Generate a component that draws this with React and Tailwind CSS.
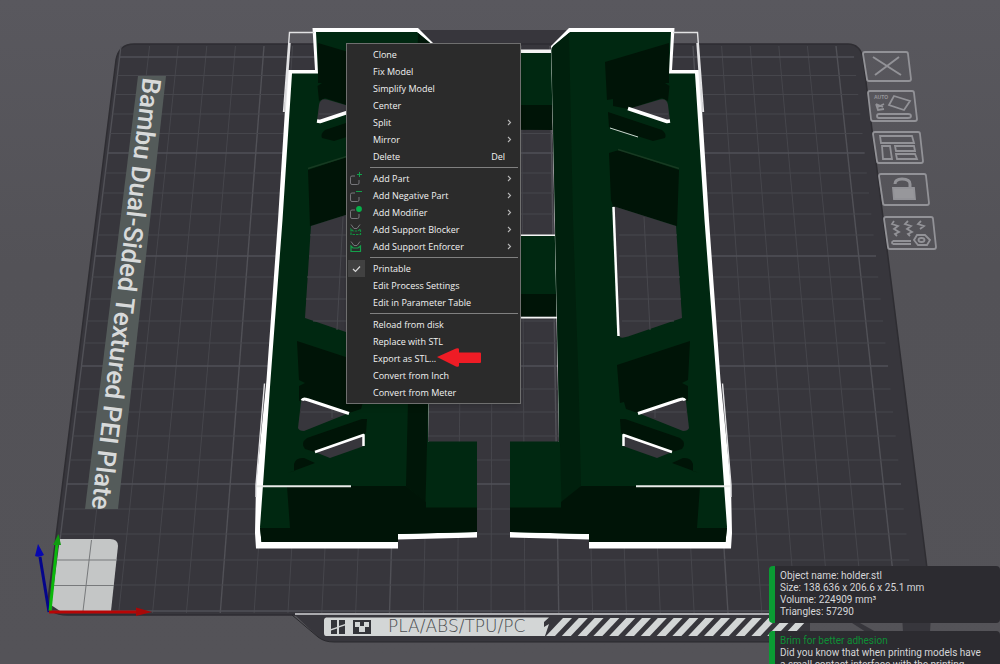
import React from "react";

const ROWS = [57, 75.5, 94.5, 114, 133.5, 153, 173, 193, 214, 235, 256, 277, 299, 321, 343, 366, 389, 412, 436, 460, 484, 509, 534, 560, 585, 611];
const COLS = Array.from({ length: 26 }, (_, i) => i);
const STRIPES = Array.from({ length: 16 }, (_, i) => 546 + i * 15.8);

const MAIN = "#002811";
const DARK = "#001407";
const FLOOR = "#37363c";

function Grid() {
  return (
    <g fill="none">
      {COLS.map((i) => (
        <path key={i} d={`M${121 + 28.6 * i} 46L${51 + 33.85 * i} 613`} stroke={i % 5 === 0 ? "#515157" : "#46464c"} strokeWidth={i % 5 === 0 ? 1.4 : 1} />
      ))}
      {ROWS.map((y, k) => {
        const t = (611 - y) / 564;
        return <path key={y} d={`M${51 + 70 * t} ${y}H${915 - 62 * t}`} stroke={k % 5 === 0 ? "#515157" : "#46464c"} strokeWidth={k % 5 === 0 ? 1.4 : 1} />;
      })}
    </g>
  );
}

function Plate() {
  return (
    <g>
      <path d="M412 46L420 30H566L574 46Z" fill={FLOOR} />
      <path d="M134 44H848Q860 44 863 58L931 600Q932 615 918 615H70Q47 616 48 600L116 60Q119 44 134 44Z" fill={FLOOR} stroke="#2e2d32" strokeWidth="1.5" />
      <path d="M288 615L296 616L318 637Q324 642 334 642H810V615Z" fill={FLOOR} />
      <path d="M292 615L318 637Q324 642 334 642H810" fill="none" stroke="#29292d" strokeWidth="1" />
      <path d="M852 623H860L876 632H866ZM902 615H931L930 632H903Z" fill={FLOOR} />
      <Grid />
    </g>
  );
}

function Holes() {
  return (
    <g fill={FLOOR}>
      <path d="M628 109L660 99.500Q667 98 668 105L670 121L664 122Z" />
      <path d="M613 206L676 226L682 318L628 336.500Q620 339 619 336Z" />
      <path d="M638 413L680 399Q685 398 686 402L689 428Q688 431 683 431Z" />
      <path d="M623 434L672 452L657 458L623 446Z" />
      <g stroke="#48484e" strokeWidth="1">
        <path d="M644 217L650 330M619 235H677M619 256H678M619 277H680M619 299H681M622 321H674M640 114H668M640 412H686M655 408V418" />
      </g>
    </g>
  );
}

function Rail({ side }) {
  return (
    <g>
      <path d="M551 46L569 28H674.500L672 70H699.500L709 220L720.500 380L731 485L732 533L731 548.500H589V539.500L510 537.500V532L559 441Z" fill="#fff" />
      <path d="M551.500 50L553 46L570 32H671L669 73.500H695L704.500 220L716.500 380L727 527L725.500 542H589V534L510 532V441.500H559L558 366L555 220Z" fill={MAIN} />
      <path d="M551.500 48L569 33L573 220L578.500 380L581 486L561.500 502L558 366L555 220Z" fill={side} />
      <path d="M581 486H700L697 528H727L725.500 542H589V534L510 532V507.500H561V502Z" fill={DARK} />
      <g fill={DARK}>
        <path d="M669 43L605 62L607 100L613 99V106L628 109L662 98L668 101L669.500 86L665 83H669Z" />
        <path d="M608 112L662 130Q667 134 665 138L653 141L609 127Z" />
        <path d="M609 153L619 150L679 170L677 226L613 206L611 200Z" />
        <path d="M617 365L690 341L688 380L682 383L688 386V401L680 399L638 413L626 409L624 402L620 403Z" />
        <path d="M620 419L625 419L680 438Q687 443 682 449L672 452L621 433Z" />
        <path d="M672 463L683 458Q691 457 693 464V471L699 473Z" />
      </g>
      <path d="M618 149.500L679 168.500" stroke="#173a22" strokeWidth="1.500" />
      <Holes />
      <g fill="none" stroke="#fff" strokeWidth="3" strokeLinejoin="round">
        <path d="M628 108.500L667 121.500L670 121" strokeWidth="3.500" />
        <path d="M613.500 207L618.500 336" strokeWidth="2.500" />
        <path d="M638 413.500L680 399.500Q684 398 685 400.500" />
        <path d="M623.500 446V435L672 452" strokeWidth="2.500" />
      </g>
      <path d="M610 128L638 137" stroke="#cdd5cf" strokeWidth="1" />
      <path d="M636 486.300H731" stroke="#e8eae8" strokeWidth="2" />
      <g fill="none" stroke="#e2e2e4" strokeWidth="1.400">
        <path d="M673 32.500H697.500L703.500 112M697 43L702 112" />
        <path d="M722.500 383.500L731 485V497" />
      </g>
    </g>
  );
}

function Model() {
  return (
    <g>
      <path d="M420 49.500H556V53H420ZM420 234.500H556V236H420ZM420 316.500H557V318.500H420Z" fill="#f4f4f4" />
      <path d="M420 53H556V105H420ZM420 236H557V294H420Z" fill={MAIN} />
      <path d="M420 105H556V130L420 129ZM420 294H558V316.500H420Z" fill={DARK} />
      <Rail side="#00200d" />
      <g transform="translate(987 0) scale(-1 1)">
        <Rail side="#001608" />
      </g>
    </g>
  );
}

function Corner() {
  return (
    <g>
      <path d="M60 539H110Q118 539 118 546L111 611H60L51 605Z" fill="#c4c6c6" />
      <path d="M56 560H116M53 585.500H114M91.500 540L83 611" stroke="#77797b" strokeWidth="1" fill="none" />
      <path d="M49 612L40 557" stroke="#05058a" strokeWidth="3" />
      <path d="M38 544L35 556Q39 558 44 555Z" fill="#0808b0" />
      <path d="M50 611L57 544" stroke="#0bb80b" strokeWidth="3" />
      <path d="M58.500 534L53 545H61Z" fill="#109a10" />
      <path d="M49 612H138" stroke="#b80505" strokeWidth="3" />
      <path d="M136 607.500L152 612L136 616Z" fill="#a80808" />
    </g>
  );
}

function PlateLabels() {
  return (
    <g>
      <path d="M138 76H166L118 509H85Z" fill="#545b5a" />
      <text transform="translate(143 77) rotate(96.8)" fontFamily="Roboto, sans-serif" fontWeight="500" fontSize="26" fill="#d8dada">
        Bambu Dual-Sided Textured PEI Plate
      </text>
      <path d="M295 614H770" stroke="#aaaaae" strokeWidth="2" />
      <path d="M326 617.500H549L544 622V627L549 624L545 636H326Q324 636 324 633V620Q324 618 326 617.500Z" fill="#d3d6d6" />
      <g fill="#d3d6d6">
        {STRIPES.map((x) => (
          <path key={x} d={`M${x} 636L${x + 17} 618H${x + 26}L${x + 9} 636Z`} />
        ))}
      </g>
      <g fill="#34353a">
        <path d="M331 620H337V627L331 629ZM331 630.500L337 628.500V634H331ZM339 620H345V624L339 626ZM339 627.500L345 625.500V634H339Z" />
        <path d="M353 620H371V634H353Z" />
      </g>
      <path d="M355 622H360V626H364V622H369V627H365V632H359V627H355Z" fill="#d3d6d6" />
      <text x="388" y="632" fontFamily="DejaVu Sans, sans-serif" fontWeight="200" fontSize="17" fill="#4a4d50">
        PLA/ABS/TPU/PC
      </text>
    </g>
  );
}

function Scene() {
  return (
    <svg className="absolute inset-0 h-full w-full" viewBox="0 0 1000 664" preserveAspectRatio="xMinYMin slice" aria-hidden="true">
      <defs>
        <linearGradient id="bg" x1="0" y1="0" x2="0" y2="1">
          <stop offset="0" stopColor="#59585e" />
          <stop offset="0.4" stopColor="#535257" />
          <stop offset="1" stopColor="#545358" />
        </linearGradient>
      </defs>
      <rect width="1000" height="664" fill="url(#bg)" />
      <Plate />
      <PlateLabels />
      <Corner />
      <Model />
    </svg>
  );
}

const TOOLS = [
  {
    label: "Remove plate",
    place: "absolute left-[862px] top-[51px]",
    art: (
      <>
        <path d="M3 1H44Q46 1 46 3L49 28Q49 30 47 30H7Q5 30 5 28L1 3Q1 1 3 1Z" />
        <path d="M11 6L39 24M37 6L13 24" strokeWidth="2" />
      </>
    ),
  },
  {
    label: "Auto orient",
    place: "absolute left-[867px] top-[90px]",
    art: (
      <>
        <path d="M3 1H45Q47 1 47 3L50 29Q50 31 48 31H6Q4 31 4 29L1 3Q1 1 3 1Z" />
        <path d="M27 6L43 11L37 20L22 15ZM12 24H41Q44 24 44 26T41 28H12Q10 28 10 26T12 24ZM17 14L11 17M9 14L11 20L17 19M9 14L16 17" />
        <text x="7" y="9" fontFamily="Liberation Sans, sans-serif" fontSize="5" fontWeight="700" fill="#97979b" stroke="none">AUTO</text>
      </>
    ),
  },
  {
    label: "Arrange objects",
    place: "absolute left-[872px] top-[131px]",
    art: <path d="M3 1H46Q48 1 48 3L51 30Q51 32 49 32H7Q5 32 5 30L1 3Q1 1 3 1ZM8 5H40L42 12H9ZM10 15H18L20 28H11ZM23 15H42L43 20H24ZM24 23H43L45 28H25Z" />,
  },
  {
    label: "Lock plate",
    place: "absolute left-[877px] top-[172px]",
    art: (
      <>
        <path d="M4 2H47Q49 2 49 4L52 31Q52 33 50 33H8Q6 33 6 31L2 4Q2 2 4 2Z" />
        <path d="M18 12Q18 7 25 7Q33 7 33 12V17" strokeWidth="3" />
        <path d="M16 16H37L38 27H17Z" fill="#97979b" />
      </>
    ),
  },
  {
    label: "Plate settings",
    place: "absolute left-[883px] top-[215px]",
    art: (
      <>
        <path d="M3 2H48Q50 2 50 4L53 32Q53 34 51 34H7Q5 34 5 32L1 4Q1 2 3 2Z" />
        <path d="M11 6L9 9L15 11L11 14L16 17L12 19L14 21M25 6L22 9L28 11L24 14L29 17L25 19L27 21M38 6L35 9L41 11L37 14M10 26H28M10 29H28M10 26Q8 28 10 29M34 20H42L47 25L44 30H35L31 25Z" />
        <ellipse cx="38.500" cy="25" rx="3" ry="2" />
      </>
    ),
  },
];

function PlateTools() {
  return TOOLS.map((t) => (
    <button key={t.label} type="button" aria-label={t.label} className={t.place}>
      <svg width="55" height="36" viewBox="0 0 55 36" fill="none" stroke="#929297" strokeWidth="1.800">
        {t.art}
      </svg>
    </button>
  ));
}

const boxPath = "M6 4H3Q1.500 4 1.500 5.500V11Q1.500 12.500 3 12.500H8.500Q10 12.500 10 11V8";
const ICONS = {
  part: (
    <>
      <path d={boxPath} stroke="#76767a" />
      <path d="M10.500 0V5M8 2.500H13" stroke="#11a04a" />
    </>
  ),
  negative: (
    <>
      <path d={boxPath} stroke="#76767a" />
      <path d="M7 2.500H13" stroke="#11a04a" />
    </>
  ),
  modifier: (
    <>
      <path d={boxPath} stroke="#76767a" />
      <circle cx="10" cy="3" r="2.900" fill="#06b14a" />
    </>
  ),
  blocker: (
    <>
      <path d="M2 1.500L5 5.500H8L11 1.500" stroke="#76767a" />
      <path d="M2 6V11.500H11.500V6L9 8H4Z" stroke="#11903f" strokeWidth="1.200" strokeDasharray="2.500 1" />
    </>
  ),
  enforcer: (
    <>
      <path d="M2 1.500L5 5.500H8L11 1.500" stroke="#76767a" />
      <path d="M2 6V11.500H11.500V6L9 8H4Z" stroke="#14a04a" strokeWidth="1.200" />
    </>
  ),
};

const MENU = [
  [{ text: "Clone" }, { text: "Fix Model" }, { text: "Simplify Model" }, { text: "Center" }, { text: "Split", sub: true }, { text: "Mirror", sub: true }, { text: "Delete", hint: "Del" }],
  [
    { text: "Add Part", sub: true, icon: "part" },
    { text: "Add Negative Part", sub: true, icon: "negative" },
    { text: "Add Modifier", sub: true, icon: "modifier" },
    { text: "Add Support Blocker", sub: true, icon: "blocker" },
    { text: "Add Support Enforcer", sub: true, icon: "enforcer" },
  ],
  [{ text: "Printable", checked: true }, { text: "Edit Process Settings" }, { text: "Edit in Parameter Table" }],
  [{ text: "Reload from disk" }, { text: "Replace with STL" }, { text: "Export as STL...", arrow: true }, { text: "Convert from Inch" }, { text: "Convert from Meter" }],
];

function MenuItem({ item }) {
  return (
    <button
      type="button"
      role={item.checked ? "menuitemcheckbox" : "menuitem"}
      aria-checked={item.checked}
      aria-haspopup={item.sub ? "menu" : undefined}
      className="relative flex h-[17px] w-full items-center pr-2 text-left hover:bg-[#414141]"
    >
      <span className={item.checked ? "ml-px mr-2 flex h-[17px] w-[17px] items-center justify-center bg-[#414141]" : "ml-0.5 mr-[7px] flex w-[17px]"}>
        {item.icon && (
          <svg width="14" height="14" viewBox="0 0 14 14" fill="none">{ICONS[item.icon]}</svg>
        )}
        {item.checked && (
          <svg width="9" height="8" viewBox="0 0 9 8" fill="none" stroke="#d8d8d8" strokeWidth="1.200"><path d="M1 4L3.500 6.500L8 1.500" /></svg>
        )}
      </span>
      <span className="flex-1">{item.text}</span>
      {item.hint && <span className="mr-[7px]">{item.hint}</span>}
      {item.sub && (
        <svg width="5" height="7" viewBox="0 0 5 7" fill="none" stroke="#b9b9b9" strokeWidth="1.100"><path d="M1 1L3.500 3.500L1 6" /></svg>
      )}
      {item.arrow && (
        <svg className="absolute left-[89px] top-[-2px]" width="46" height="20" viewBox="0 0 46 20" aria-hidden="true">
          <path d="M1 9L20 0.500Q23 -0.500 23 1.500V4.500H44Q45 4.500 45 5.500V14Q45 15 44 15H23V17.500Q23 19.500 20 18.500Z" fill="#ee1c25" />
        </svg>
      )}
    </button>
  );
}

function ContextMenu() {
  return (
    <div role="menu" aria-label="Object" className="absolute left-[346px] top-[43px] w-[175px] border border-[#6f6f6f] bg-[#2b2b2b] py-[2px] font-['Open_Sans',sans-serif] text-[9px] leading-[16px] text-[#f2f2f2] shadow-md">
      {MENU.map((group, g) => (
        <React.Fragment key={g}>
          {g > 0 && <div role="separator" className="my-[2px] ml-[23px] mr-[2px] h-px bg-[#808080]" />}
          {group.map((item) => (
            <MenuItem key={item.text} item={item} />
          ))}
        </React.Fragment>
      ))}
    </div>
  );
}

function Notices() {
  return (
    <aside className="absolute bottom-0 left-[769px] right-0 flex h-[98px] flex-col gap-2 overflow-hidden font-[Roboto,sans-serif] text-[10px] leading-[12px] text-[#d6d6d8]">
      <section className="shrink-0 rounded-sm border-l-[6px] border-[#0a9b33] bg-[#2c2b30] py-1 pb-[5px] pl-[5px]">
        <p>Object name: holder.stl</p>
        <p>Size: 138.636 x 206.6 x 25.1 mm</p>
        <p>Volume: 224909 mm³</p>
        <p>Triangles: 57290</p>
      </section>
      <section className="shrink-0 whitespace-nowrap rounded-sm border-l-[6px] border-[#0a9b33] bg-[#2c2b30] py-1 pl-[5px]">
        <p className="text-[#0d8f35]">Brim for better adhesion</p>
        <p>Did you know that when printing models have</p>
        <p>a small contact interface with the printing</p>
      </section>
    </aside>
  );
}

export default function App() {
  return (
    <main className="relative h-screen overflow-hidden bg-[#545358]">
      <Scene />
      <PlateTools />
      <ContextMenu />
      <Notices />
    </main>
  );
}
